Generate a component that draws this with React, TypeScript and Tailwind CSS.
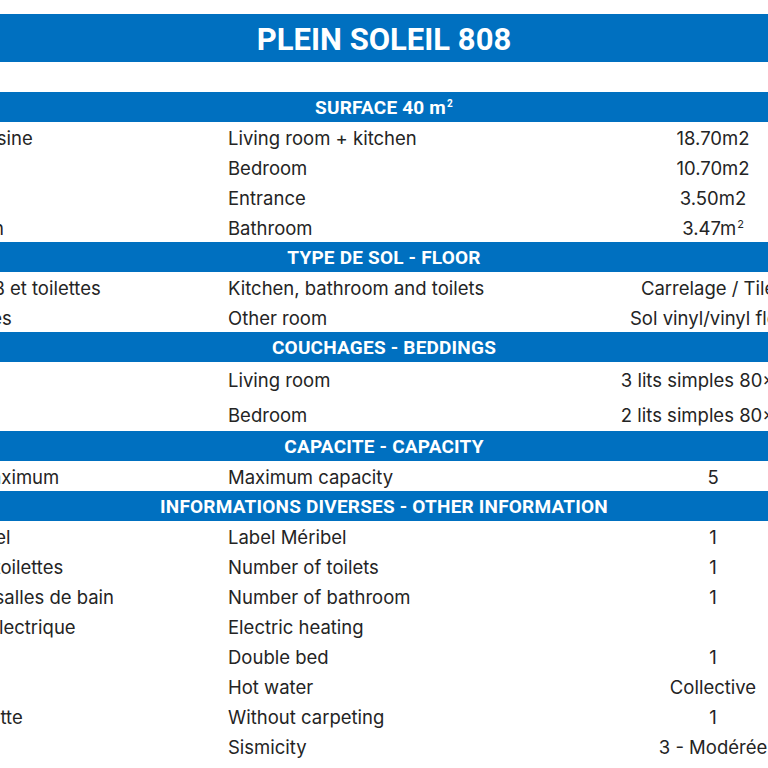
import React from "react";

type Row = { fr: string; en: string; value: React.ReactNode; tall?: boolean };
type Section = { title: React.ReactNode; rows: Row[] };

const sections: Section[] = [
  {
    title: (
      <>
        SURFACE 40 m<sup className="text-[10px] ml-[1px] -top-[7px]">2</sup>
      </>
    ),
    rows: [
      { fr: "Séjour + cuisine", en: "Living room + kitchen", value: "18.70m2" },
      { fr: "Chambre", en: "Bedroom", value: "10.70m2" },
      { fr: "Entrée", en: "Entrance", value: "3.50m2" },
      {
        fr: "Salle de bain",
        en: "Bathroom",
        value: (
          <span>
            3.47m<sup className="text-[11px] ml-[1px] -top-[7px]">2</sup>
          </span>
        ),
      },
    ],
  },
  {
    title: "TYPE DE SOL - FLOOR",
    rows: [
      { fr: "Cuisine, SDB et toilettes", en: "Kitchen, bathroom and toilets", value: "Carrelage / Tiles" },
      { fr: "Autres pièces", en: "Other room", value: "Sol vinyl/vinyl floor" },
    ],
  },
  {
    title: "COUCHAGES - BEDDINGS",
    rows: [
      { fr: "Séjour", en: "Living room", value: "3 lits simples 80x190", tall: true },
      { fr: "Chambre", en: "Bedroom", value: "2 lits simples 80x190", tall: true },
    ],
  },
  {
    title: "CAPACITE - CAPACITY",
    rows: [{ fr: "Capacité maximum", en: "Maximum capacity", value: "5" }],
  },
  {
    title: "INFORMATIONS DIVERSES - OTHER INFORMATION",
    rows: [
      { fr: "Label Méribel", en: "Label Méribel", value: "1" },
      { fr: "Nombre de toilettes", en: "Number of toilets", value: "1" },
      { fr: "Nombre de salles de bain", en: "Number of bathroom", value: "1" },
      { fr: "Chauffage électrique", en: "Electric heating", value: "" },
      { fr: "Lit double", en: "Double bed", value: "1" },
      { fr: "Eau chaude", en: "Hot water", value: "Collective" },
      { fr: "Sans moquette", en: "Without carpeting", value: "1" },
      { fr: "Sismicité", en: "Sismicity", value: "3 - Modérée" },
    ],
  },
];

function Bar({ children }: { children: React.ReactNode }) {
  return (
    <div className="h-[30px] pt-[3px] bg-[#0070c0] flex items-center justify-center text-white font-bold text-[19px] font-['Roboto',sans-serif] tracking-[0.2px]">
      <span>{children}</span>
    </div>
  );
}

export default function App() {
  return (
    <div className="w-[768px] h-[768px] bg-white overflow-hidden text-[#242424] font-['Inter',sans-serif]">
      <div className="w-[984px] -ml-[108px] pt-[14px]">
        <div className="h-[48px] pt-[4px] bg-[#0070c0] flex items-center justify-center text-white font-bold text-[31px] font-['Roboto',sans-serif]">
          <span>PLEIN SOLEIL 808</span>
        </div>
        <div className="h-[30px]" />
        {sections.map((s, i) => (
          <div key={i}>
            <Bar>{s.title}</Bar>
            {s.rows.map((r, j) => (
              <div
                key={j}
                className={`grid grid-cols-[336px_347px_276px] items-center pt-[3px] text-[18.5px] whitespace-nowrap ${
                  r.tall ? (j === 0 ? "h-[35px]" : "h-[34px]") : "h-[30px]"
                }`}
              >
                <div>{r.fr}</div>
                <div>{r.en}</div>
                <div className="flex justify-center">{r.value}</div>
              </div>
            ))}
          </div>
        ))}
      </div>
    </div>
  );
}
